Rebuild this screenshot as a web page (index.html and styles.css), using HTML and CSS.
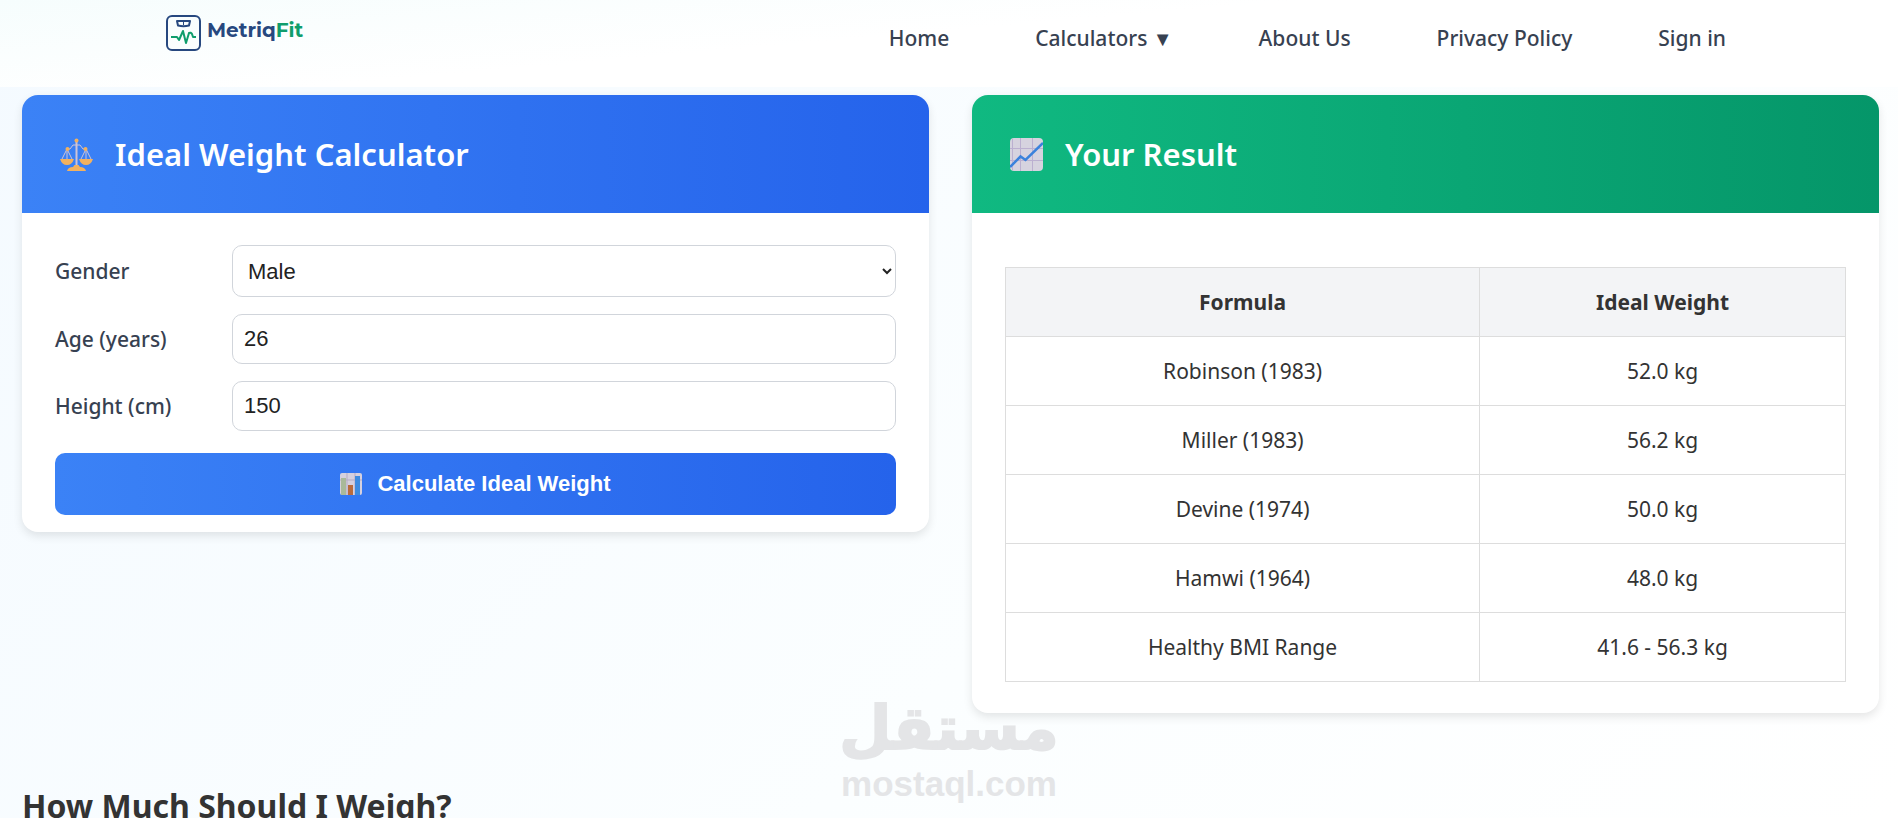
FILE: index.html
```html
<!DOCTYPE html>
<html lang="en">
<head>
    <meta charset="UTF-8">
    <meta name="viewport" content="width=device-width, initial-scale=1.0">
    <title>Ideal Weight Calculator - MetriqFit</title>
    <link rel="stylesheet" href="styles.css">
</head>
<body>
    <header class="site-header">
        <div class="nav-container">
            <a class="logo" href="#">
                <svg class="logo-mark" viewBox="0 0 36 36" fill="none" aria-hidden="true">
                    <rect x="1" y="1" width="33" height="34" rx="5" stroke="#27487f" stroke-width="2"/>
                    <path d="M11 6h13l-1 4.500q-5.500 1.500-11 0z" stroke="#27487f" stroke-width="2" stroke-linejoin="round"/>
                    <path d="M17.500 7v3" stroke="#27487f"/>
                    <path d="M5 22h6l2 3 4-9 3 12 3-10q2-1 3 1l1 3h3" stroke="#0f9d6c" stroke-width="2" stroke-linejoin="round"/>
                </svg>
                <span class="logo-text">Metriq<span class="logo-fit">Fit</span></span>
            </a>
            <nav class="nav-links">
                <a href="#">Home</a>
                <a href="#">Calculators <span class="caret">▼</span></a>
                <a href="#">About Us</a>
                <a href="#">Privacy Policy</a>
                <a href="#">Sign in</a>
            </nav>
        </div>
    </header>

    <main class="page">
        <div class="calculator-grid">
            <section class="card">
                <div class="card-header blue">
                    <svg class="card-icon" viewBox="0 0 33 33" fill="none" aria-hidden="true">
                        <path d="M6 11h4l3-4h7l3 4h4M7 11L2 21M7 11v10M7 11l5 10M26 11l-5 10M26 11v10M26 11l5 10" stroke="#cfc3d6"/>
                        <path d="M16.500 3v25" stroke="#cfc3d6" stroke-width="2"/>
                        <circle cx="16.500" cy="2.500" r="2" fill="#f2b15f"/>
                        <circle cx="7.500" cy="11" r="2" fill="#f2b15f"/>
                        <circle cx="25.500" cy="11" r="2" fill="#f2b15f"/>
                        <path d="M0 21h14q-2 6-7 6t-7-6zM19 21h14q-2 6-7 6t-7-6zM7 33q1-4 6-4l1.500-2h4l1.500 2q5 0 6 4z" fill="#f2b15f"/>
                    </svg>
                    <h1>Ideal Weight Calculator</h1>
                </div>
                <form class="card-body form">
                    <div class="form-row">
                        <label for="gender">Gender</label>
                        <select id="gender">
                            <option>Male</option>
                            <option>Female</option>
                        </select>
                    </div>
                    <div class="form-row">
                        <label for="age">Age (years)</label>
                        <input type="text" inputmode="numeric" id="age" value="26">
                    </div>
                    <div class="form-row">
                        <label for="height">Height (cm)</label>
                        <input type="text" inputmode="numeric" id="height" value="150">
                    </div>
                    <button type="button" class="calculate-btn">
                        <svg class="btn-icon" viewBox="0 0 22 22" aria-hidden="true">
                            <rect width="22" height="22" rx="2" fill="#d5d0de"/>
                            <path d="M7 0v22M15 0v22M0 7h22" stroke="#b5abc5"/>
                            <rect x="1" y="5" width="5" height="17" fill="#a9b99a"/>
                            <rect x="8" y="12" width="5" height="10" fill="#b96b3c"/>
                            <rect x="15" y="3" width="5" height="19" fill="#3d8be0"/>
                        </svg>
                        Calculate Ideal Weight
                    </button>
                </form>
            </section>

            <section class="card">
                <div class="card-header green">
                    <svg class="card-icon" viewBox="0 0 33 33" fill="none" aria-hidden="true">
                        <rect width="33" height="33" rx="4" fill="#d6d3df"/>
                        <path d="M2.500 1v31M10.500 0v33M22.500 0v33M0 10.500h33M0 22.500h33" stroke="#bbb0d0"/>
                        <path d="M0 29L10.500 18.500L15.500 22L33 5" stroke="#3b82dc" stroke-width="2.500"/>
                    </svg>
                    <h2>Your Result</h2>
                </div>
                <div class="card-body result">
                    <table class="result-table">
                        <thead>
                            <tr><th>Formula</th><th>Ideal Weight</th></tr>
                        </thead>
                        <tbody>
                            <tr><td>Robinson (1983)</td><td>52.0 kg</td></tr>
                            <tr><td>Miller (1983)</td><td>56.2 kg</td></tr>
                            <tr><td>Devine (1974)</td><td>50.0 kg</td></tr>
                            <tr><td>Hamwi (1964)</td><td>48.0 kg</td></tr>
                            <tr><td>Healthy BMI Range</td><td>41.6 - 56.3 kg</td></tr>
                        </tbody>
                    </table>
                </div>
            </section>
        </div>

        <h2 class="article-title">How Much Should I Weigh?</h2>
    </main>

    <div class="watermark">
        <span class="watermark-ar" lang="ar" dir="rtl">مستقل</span>
        <span class="watermark-en">mostaql.com</span>
    </div>
</body>
</html>
```
FILE: styles.css
```css
* {
    box-sizing: border-box;
}
body {
    margin: 0;
    height: 100vh;
    overflow: hidden;
    font-family: "Segoe UI", "Noto Sans", sans-serif;
    font-size: 21px;
    color: #333;
    background: linear-gradient(135deg, #f4faff 0%, #fbfeff 60%, #fff 100%);
}
.site-header {
    height: 87px;
    background: linear-gradient(175deg, #f6fdfd 0%, #fff 45%);
}
.nav-container {
    max-width: 1566px;
    margin: 0 auto;
    display: flex;
    justify-content: space-between;
}
.logo {
    display: flex;
    gap: 5px;
    margin-top: 15px;
    text-decoration: none;
    color: #27487f;
}
.logo-mark {
    width: 36px;
    height: 36px;
}
.logo-text {
    font-family: Montserrat, Lato, sans-serif;
    font-size: 20px;
    font-weight: 700;
    line-height: 30px;
}
.logo-fit {
    color: #0f9d6c;
}
.nav-links {
    display: flex;
    gap: 86px;
    margin-top: 22px;
    padding-right: 6px;
}
.nav-links a {
    color: #374151;
    font-weight: 500;
    line-height: 32px;
    text-decoration: none;
}
.caret {
    font-size: 20px;
}
.page {
    padding: 8px 19px 0 22px;
}
.calculator-grid {
    display: grid;
    grid-template-columns: 1fr 1fr;
    gap: 43px;
    align-items: start;
}
.card {
    background: white;
    border-radius: 16px;
    overflow: hidden;
    box-shadow: 0 4px 10px rgba(0, 0, 0, 0.1);
}
.card-header {
    display: flex;
    align-items: center;
    gap: 22px;
    height: 118px;
    padding: 0 38px;
    color: white;
}
.card-header h1,
.card-header h2 {
    margin: 0;
    font-size: 31px;
    font-weight: 600;
}
.blue {
    background: linear-gradient(90deg, #3b82f6, #2563eb);
}
.green {
    background: linear-gradient(90deg, #10b981, #059669);
}
.card-icon {
    width: 33px;
    height: 33px;
}
.card-body {
    padding: 32px 33px 17px;
}
.form {
    display: flex;
    flex-direction: column;
    gap: 17px;
}
.form-row {
    display: grid;
    grid-template-columns: 177px 1fr;
    align-items: center;
}
.form-row label {
    color: #374151;
    font-weight: 500;
}
.form-row input,
.form-row select {
    width: 100%;
    height: 50px;
    padding: 0 11px;
    border: 1px solid #d1d5db;
    border-radius: 10px;
    background: white;
    color: #222;
    font-family: "Liberation Sans", Arial, sans-serif;
    font-size: 22px;
}
.form-row select {
    height: 52px;
}
.calculate-btn {
    display: flex;
    align-items: center;
    justify-content: center;
    gap: 15px;
    height: 62px;
    margin-top: 5px;
    border: none;
    border-radius: 10px;
    background: linear-gradient(90deg, #3b82f6, #2563eb);
    color: white;
    font-family: "Liberation Sans", Arial, sans-serif;
    font-size: 22px;
    font-weight: 700;
}
.btn-icon {
    width: 22px;
    height: 22px;
}
.result {
    padding: 54px 33px 31px;
}
.result-table {
    width: 100%;
    border-collapse: collapse;
}
.result-table th,
.result-table td {
    height: 69px;
    padding: 0 28px;
    border: 1px solid #ddd;
    text-align: center;
}
.result-table th {
    background: #f3f4f6;
}
.article-title {
    margin: 69px 0 0;
    font-size: 32px;
    font-weight: 700;
    line-height: 48px;
}
.watermark {
    position: absolute;
    bottom: 14px;
    left: 50%;
    transform: translateX(-50%);
    display: flex;
    flex-direction: column;
    align-items: center;
    color: #e4e5e7;
    font-weight: 700;
}
.watermark-ar {
    font-family: "DejaVu Sans", sans-serif;
    font-size: 60px;
    line-height: 72px;
    -webkit-text-stroke: 2px #e4e5e7;
}
.watermark-en {
    font-family: "Liberation Sans", Arial, sans-serif;
    font-size: 35px;
    line-height: 40px;
}
```
